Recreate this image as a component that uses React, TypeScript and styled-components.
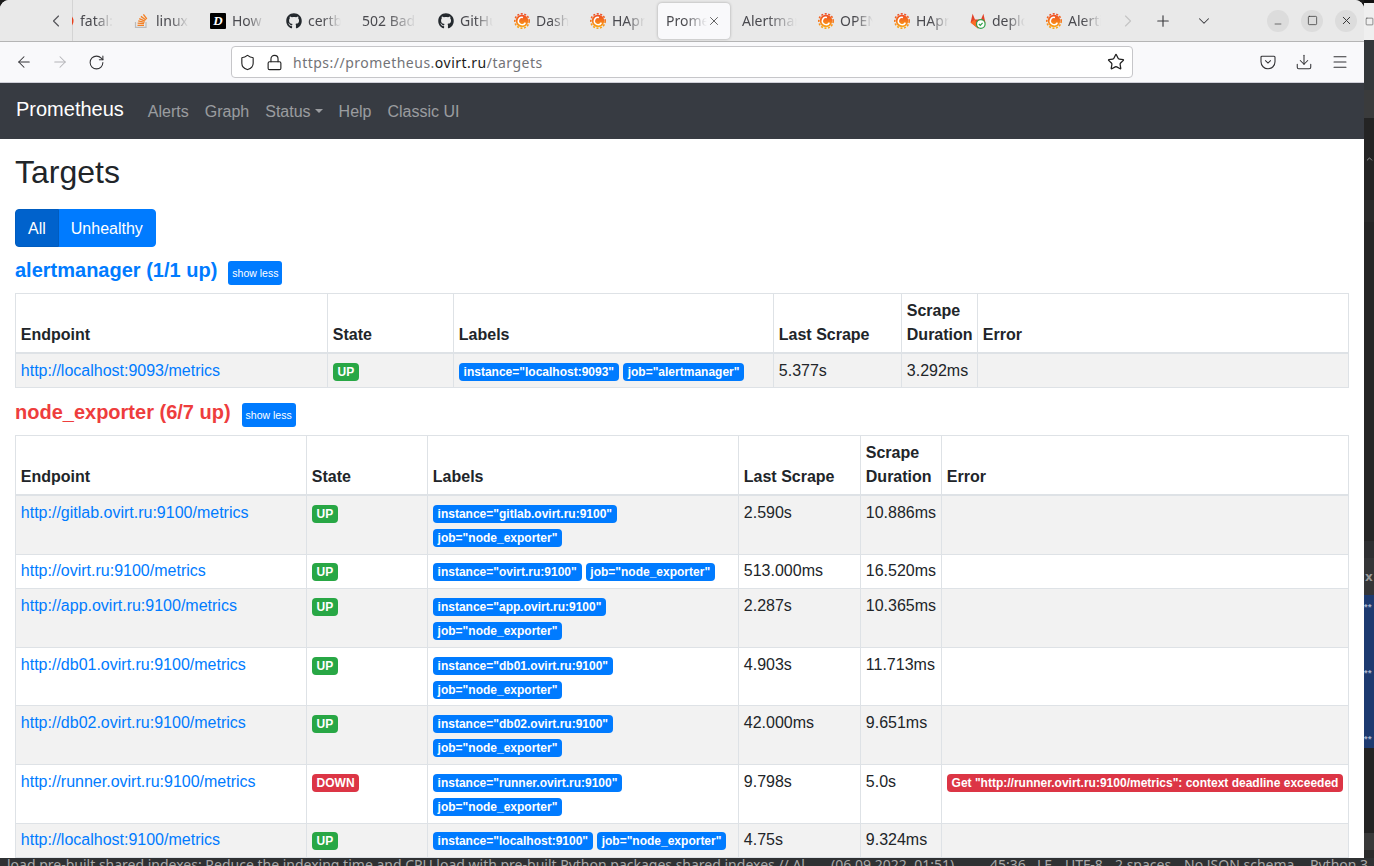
import React from "react";
import styled, { createGlobalStyle } from "styled-components";
import {
  ArrowLeft, ArrowRight, RotateCw, Shield, Lock, Star, Download, Menu, X, Plus,
  ChevronDown, ChevronLeft, ChevronRight, Minus, Square, ChevronUp,
} from "lucide-react";
import { FaGithub } from "react-icons/fa";

const Global = createGlobalStyle`
  html, body { margin: 0; padding: 0; background: #1c1c1c; }
  * { box-sizing: border-box; }
`;

const Screen = styled.div`
  width: 1374px; height: 866px; overflow: hidden;
  display: flex; flex-direction: column; background: #1c1c1c;
`;
const Desktop = styled.div`display: flex; flex: 0 0 858px; height: 858px;`;
const Browser = styled.div`
  flex: 0 0 1364px; width: 1364px; background: #fff; overflow: hidden;
  border-radius: 9px 9px 0 0; display: flex; flex-direction: column;
`;

/* ---------- tab strip ---------- */
const TabBar = styled.div`
  flex: 0 0 42px; height: 42px; background: #e9e9e9; border-bottom: 1px solid #b5b5b5;
  display: flex; align-items: center; color: #4a4a4f;
  font-family: "Noto Sans", sans-serif; font-size: 14px;
`;
const TabBack = styled.div`flex: 0 0 72px; padding-left: 46px; display: flex; align-items: center; color: #55555a;`;
const TabScroller = styled.div`
  flex: 0 0 1040px; overflow: hidden; display: flex; align-items: center; height: 41px;
  box-shadow: inset 1px 0 0 #d4d4d4;
`;
const TabRow = styled.div`display: flex; align-items: center; margin-left: -24px; flex: none;`;
const Tab = styled.div<{ $active?: boolean }>`
  flex: 0 0 72px; width: 72px; height: 36px; margin: 0 2px; padding: 0 9px 0 8px;
  display: flex; align-items: center; border-radius: 4px;
  background: ${(p) => (p.$active ? "#f9f9fb" : "transparent")};
  box-shadow: ${(p) => (p.$active ? "0 0 3px rgba(0,0,0,.3)" : "none")};
`;
const FavSlot = styled.span`flex: 0 0 22px; width: 22px; height: 16px; display: block;`;
const TabLabel = styled.span`
  flex: 1 1 0; min-width: 0; overflow: hidden; white-space: nowrap; line-height: 20px;
  -webkit-mask-image: linear-gradient(to right, #000 45%, transparent 100%);
  mask-image: linear-gradient(to right, #000 45%, transparent 100%);
`;
const TabClose = styled.span`flex: 0 0 14px; display: flex; color: #333;`;
const StripSlot = styled.div<{ $w: number; $c?: string }>`
  flex: 0 0 ${(p) => p.$w}px; display: flex; justify-content: center; align-items: center;
  color: ${(p) => p.$c ?? "#3a3a3e"};
`;
const WinControls = styled.div`display: flex; gap: 12px; margin-left: 41px;`;
const WinBtn = styled.div`
  width: 22px; height: 22px; border-radius: 50%; background: #dcdcdc; color: #333;
  display: flex; align-items: center; justify-content: center;
`;

/* ---------- url toolbar ---------- */
const Toolbar = styled.div`
  flex: 0 0 41px; height: 41px; background: #f9f9fb; border-bottom: 1px solid #cfcfd8;
  display: flex; align-items: center; padding-left: 6px;
`;
const ToolBtn = styled.div<{ $muted?: boolean }>`
  flex: 0 0 36px; display: flex; justify-content: center; align-items: center;
  color: ${(p) => (p.$muted ? "#b4b4b8" : "#333336")};
`;
const UrlBox = styled.div`
  flex: 0 0 902px; height: 32px; margin: 0 117px; background: #fff; border: 1px solid #c6c6c9;
  border-radius: 4px; display: flex; align-items: center; padding: 0 7px;
  font-family: "Noto Sans", sans-serif; font-size: 14px; letter-spacing: 0.49px; color: #737377;
`;
const UrlIcon = styled.span<{ $ml?: number }>`
  display: flex; flex: none; color: #222; margin-left: ${(p) => p.$ml ?? 0}px;
`;
const UrlText = styled.span`margin-left: 10px; flex: 1; white-space: nowrap;`;
const UrlHost = styled.span`color: #1a1a1a;`;

/* ---------- prometheus page ---------- */
const Nav = styled.nav`
  flex: 0 0 56px; height: 56px; background: #373b42; padding: 8px 16px; display: flex;
  align-items: center; font-family: "Liberation Sans", Arial, sans-serif;
`;
const Brand = styled.a`
  color: #fff; font-size: 20px; line-height: 30px; margin-right: 16px; padding-bottom: 4px;
`;
const NavLink = styled.a`
  color: rgba(255, 255, 255, 0.5); font-size: 16px; line-height: 24px; padding: 9px 8px 7px;
  display: flex; align-items: center;
`;
const Caret = styled.span`
  display: inline-block; margin-left: 4px; width: 0; height: 0;
  border-top: 4.8px solid currentColor; border-left: 4.8px solid transparent;
  border-right: 4.8px solid transparent; margin-bottom: 2px;
`;
const Main = styled.main`
  flex: 1; min-height: 0; overflow: hidden; padding: 14px 15px 0; color: #212529;
  font-family: "Liberation Sans", Arial, sans-serif; font-size: 16px; line-height: 24px;
`;
const Title = styled.h2`font-size: 32px; line-height: 38.4px; font-weight: 500; margin: 0 0 18px;`;
const Filter = styled.div`display: inline-flex; vertical-align: top; margin-bottom: 10.8px;`;
const FilterBtn = styled.button<{ $active?: boolean; $pos: "l" | "r" }>`
  height: 38px; padding: 7px 12px 5px; font: inherit; color: #fff; position: relative;
  z-index: ${(p) => (p.$active ? 1 : 0)};
  border: 1px solid ${(p) => (p.$active ? "#005cbf" : "#007bff")};
  background: ${(p) => (p.$active ? "#0062cc" : "#007bff")};
  margin-left: ${(p) => (p.$pos === "r" ? "-1px" : "0")};
  border-radius: ${(p) => (p.$pos === "l" ? "4px 0 0 4px" : "0 4px 4px 0")};
`;
const Section = styled.section`margin-bottom: 12.1px;`;
const SectionHead = styled.div`display: flex; align-items: flex-start; margin-bottom: 8px;`;
const SectionTitle = styled.a<{ $bad?: boolean }>`
  font-size: 20px; line-height: 24px; font-weight: 700; color: ${(p) => (p.$bad ? "#ee3d3d" : "#007bff")};
`;
const ShowLess = styled.button`
  height: 24px; margin: 3px 0 0 11px; padding: 0 4px; border: 0; border-radius: 3px; background: #007bff; color: #fff;
  font-family: "Liberation Sans", Arial, sans-serif; font-size: 10.5px; line-height: 24px;
`;
const Table = styled.table`
  width: 1333px; table-layout: fixed; border-collapse: collapse; font-size: 16px;
  th, td { border: 1px solid #dee2e6; padding: 4.8px; vertical-align: top; }
  th { vertical-align: bottom; text-align: left; font-weight: 700; border-bottom-width: 2px; }
  tbody tr:nth-child(odd) { background: rgba(0, 0, 0, 0.05); }
`;
const Endpoint = styled.a`color: #007bff;`;
const Badge = styled.span<{ $c: string }>`
  display: inline-block; padding: 3px 4.8px; margin-right: 4px; font-size: 12px; font-weight: 700;
  line-height: 1; white-space: nowrap; border-radius: 4px; color: #fff; background: ${(p) => p.$c};
`;

/* ---------- what lies behind the browser ---------- */
const SideStrip = styled.div`flex: 0 0 10px; width: 10px; display: flex; flex-direction: column; overflow: hidden;`;
const SideBlock = styled.div<{ $h: number; $bg: string }>`
  flex: 0 0 ${(p) => p.$h}px; height: ${(p) => p.$h}px; background: ${(p) => p.$bg}; color: #9a9a9a;
  display: flex; align-items: center; padding-left: 1px; overflow: hidden;
  font: 700 12px/14px "DejaVu Sans", sans-serif;
`;
const BlueBlock = styled(SideBlock)`
  flex-direction: column; align-items: flex-start; padding-top: 2px; gap: 46px; padding-left: 0;
  color: #aab4cc; font: 700 9px/20px "Liberation Sans", sans-serif; letter-spacing: 0.5px;
`;
const StatusBar = styled.div`
  flex: 0 0 8px; height: 8px; overflow: hidden; background: #2f3133; color: #a9a9a9; display: flex;
  font-family: "Noto Sans", sans-serif; font-size: 14px; line-height: 14px; white-space: nowrap;
`;
const StatusItem = styled.span<{ $w: number; $pl?: number }>`
  flex: 0 0 ${(p) => p.$w}px; width: ${(p) => p.$w}px; padding-left: ${(p) => p.$pl ?? 0}px; overflow: hidden;
`;

/* ---------- favicons ---------- */
const Grafana = () => (
  <svg width="16" height="16" viewBox="0 0 16 16">
    <defs>
      <linearGradient id="gf" x1="0" y1="0" x2="0" y2="1">
        <stop offset="0" stopColor="#ef4b23" />
        <stop offset="1" stopColor="#fba716" />
      </linearGradient>
    </defs>
    <circle cx="8" cy="8" r="7.2" fill="none" stroke="url(#gf)" strokeWidth="1.6" strokeDasharray="2 1.6" />
    <circle cx="8" cy="8" r="6.2" fill="url(#gf)" />
    <path d="M11.4 9.6A3.7 3.7 0 1 1 9 4.4" fill="none" stroke="#fff" strokeWidth="1.5" />
  </svg>
);
const StackOverflow = () => (
  <svg width="16" height="16" viewBox="0 0 16 16">
    <path d="M1.5 9v5.3h10.5V9" fill="none" stroke="#bcbbbb" strokeWidth="1.2" />
    <g stroke="#f48024" strokeWidth="1.3" fill="none">
      <path d="M3.5 12.4h6.5" />
      <path d="M3.6 10.2l6.5.5" />
      <path d="M4.2 7.9l6.3 1.5" />
      <path d="M5.2 5.6l5.8 2.6" />
      <path d="M6.9 3.4l5 3.6" />
      <path d="M9.4 1.4l3.4 4.6" />
    </g>
  </svg>
);
const DevLogo = styled.span`
  width: 16px; height: 16px; display: flex; align-items: center; justify-content: center;
  background: #000; color: #fff; border-radius: 1px;
  font: italic 700 13px/16px "Liberation Serif", serif;
`;
const GitLab = () => (
  <svg width="16" height="16" viewBox="0 0 16 16">
    <path d="M8 15.5L.6 9.6 2.6.8 5 6.6h6L13.4.8l2 8.8z" fill="#e24329" />
    <path d="M8 15.5L.6 9.6 5 6.6zM8 15.5l7.4-5.9L11 6.6z" fill="#fc6d26" />
    <circle cx="10.8" cy="11" r="4.3" fill="#fff" stroke="#31a24c" strokeWidth="1.2" />
    <path d="M8.9 11l1.4 1.4 2.3-2.6" fill="none" stroke="#31a24c" strokeWidth="1.2" />
  </svg>
);
const RedDot = () => (
  <svg width="16" height="16" viewBox="0 0 16 16"><circle cx="8" cy="8" r="7.5" fill="#e8401c" /></svg>
);
const Pocket = () => (
  <svg width="16" height="16" viewBox="0 0 16 16" fill="none" stroke="currentColor" strokeWidth="1.1">
    <path d="M2 2.2h12a1 1 0 0 1 1 1v4.6a7 7 0 0 1-14 0V3.2a1 1 0 0 1 1-1z" />
    <path d="M5.2 6.4L8 9.1l2.8-2.7" />
  </svg>
);

type TabInfo = { label: string; icon?: React.ReactNode; active?: boolean };
const tabs: TabInfo[] = [
  { label: "fatal: could", icon: <RedDot /> },
  { label: "linux - How", icon: <StackOverflow /> },
  { label: "How to", icon: <DevLogo>D</DevLogo> },
  { label: "certbot", icon: <FaGithub size={16} color="#24292e" /> },
  { label: "502 Bad Gateway" },
  { label: "GitHub", icon: <FaGithub size={16} color="#24292e" /> },
  { label: "Dashboard", icon: <Grafana /> },
  { label: "HAproxy", icon: <Grafana /> },
  { label: "Prometheus", active: true },
  { label: "Alertmanager" },
  { label: "OPEN", icon: <Grafana /> },
  { label: "HAproxy", icon: <Grafana /> },
  { label: "deploy", icon: <GitLab /> },
  { label: "Alerting", icon: <Grafana /> },
];

const BLUE = "#007bff";
const GREEN = "#28a745";
const RED = "#dc3545";

type Target = { host: string; down?: boolean; last: string; dur: string; job: string; err?: string };
const groupOne: Target[] = [
  { host: "localhost:9093", last: "5.377s", dur: "3.292ms", job: "alertmanager" },
];
const groupTwo: Target[] = [
  { host: "gitlab.ovirt.ru:9100", last: "2.590s", dur: "10.886ms", job: "node_exporter" },
  { host: "ovirt.ru:9100", last: "513.000ms", dur: "16.520ms", job: "node_exporter" },
  { host: "app.ovirt.ru:9100", last: "2.287s", dur: "10.365ms", job: "node_exporter" },
  { host: "db01.ovirt.ru:9100", last: "4.903s", dur: "11.713ms", job: "node_exporter" },
  { host: "db02.ovirt.ru:9100", last: "42.000ms", dur: "9.651ms", job: "node_exporter" },
  {
    host: "runner.ovirt.ru:9100", down: true, last: "9.798s", dur: "5.0s", job: "node_exporter",
    err: 'Get "http://runner.ovirt.ru:9100/metrics": context deadline exceeded',
  },
  { host: "localhost:9100", last: "4.75s", dur: "9.324ms", job: "node_exporter" },
];

const TargetTable = ({ widths, rows }: { widths: number[]; rows: Target[] }) => (
  <Table>
    <colgroup>
      {widths.map((w, i) => <col key={i} width={w} />)}
    </colgroup>
    <thead>
      <tr>
        <th>Endpoint</th><th>State</th><th>Labels</th><th>Last Scrape</th><th>Scrape Duration</th><th>Error</th>
      </tr>
    </thead>
    <tbody>
      {rows.map((r) => (
        <tr key={r.host}>
          <td><Endpoint>http://{r.host}/metrics</Endpoint></td>
          <td><Badge $c={r.down ? RED : GREEN}>{r.down ? "DOWN" : "UP"}</Badge></td>
          <td>
            <Badge $c={BLUE}>instance="{r.host}"</Badge>
            <Badge $c={BLUE}>job="{r.job}"</Badge>
          </td>
          <td>{r.last}</td>
          <td>{r.dur}</td>
          <td>{r.err && <Badge $c={RED}>{r.err}</Badge>}</td>
        </tr>
      ))}
    </tbody>
  </Table>
);

export default function App() {
  return (
    <Screen>
      <Global />
      <Desktop>
        <Browser>
          <TabBar>
            <TabBack><ChevronLeft size={20} strokeWidth={1.4} /></TabBack>
            <TabScroller>
              <TabRow>
                {tabs.map((t, i) => (
                  <Tab key={i} $active={t.active}>
                    {t.icon && <FavSlot>{t.icon}</FavSlot>}
                    <TabLabel>{t.label}</TabLabel>
                    {t.active && <TabClose><X size={14} strokeWidth={1.3} /></TabClose>}
                  </Tab>
                ))}
              </TabRow>
            </TabScroller>
            <StripSlot $w={32} $c="#c4c4c4"><ChevronRight size={20} strokeWidth={1.4} /></StripSlot>
            <StripSlot $w={38}><Plus size={18} strokeWidth={1.5} /></StripSlot>
            <StripSlot $w={44}><ChevronDown size={18} strokeWidth={1.4} /></StripSlot>
            <WinControls>
              <WinBtn><Minus size={10} strokeWidth={1.6} style={{ marginTop: 6 }} /></WinBtn>
              <WinBtn><Square size={11} strokeWidth={1.6} /></WinBtn>
              <WinBtn><X size={13} strokeWidth={1.8} /></WinBtn>
            </WinControls>
          </TabBar>
          <Toolbar>
            <ToolBtn><ArrowLeft size={18} strokeWidth={1.4} /></ToolBtn>
            <ToolBtn $muted><ArrowRight size={18} strokeWidth={1.4} /></ToolBtn>
            <ToolBtn><RotateCw size={17} strokeWidth={1.5} /></ToolBtn>
            <UrlBox>
              <UrlIcon><Shield size={17} strokeWidth={1.6} /></UrlIcon>
              <UrlIcon $ml={10}><Lock size={17} strokeWidth={1.6} /></UrlIcon>
              <UrlText>https://prometheus.<UrlHost>ovirt.ru</UrlHost>/targets</UrlText>
              <UrlIcon><Star size={18} strokeWidth={1.7} /></UrlIcon>
            </UrlBox>
            <ToolBtn><Pocket /></ToolBtn>
            <ToolBtn><Download size={18} strokeWidth={1.4} /></ToolBtn>
            <ToolBtn><Menu size={18} strokeWidth={1.4} /></ToolBtn>
          </Toolbar>
          <Nav>
            <Brand>Prometheus</Brand>
            <NavLink>Alerts</NavLink>
            <NavLink>Graph</NavLink>
            <NavLink>Status<Caret /></NavLink>
            <NavLink>Help</NavLink>
            <NavLink>Classic UI</NavLink>
          </Nav>
          <Main>
            <Title>Targets</Title>
            <Filter>
              <FilterBtn $active $pos="l">All</FilterBtn>
              <FilterBtn $pos="r">Unhealthy</FilterBtn>
            </Filter>
            <Section>
              <SectionHead>
                <SectionTitle>alertmanager (1/1 up)</SectionTitle>
                <ShowLess>show less</ShowLess>
              </SectionHead>
              <TargetTable widths={[312, 126, 320, 128, 76, 371]} rows={groupOne} />
            </Section>
            <Section>
              <SectionHead>
                <SectionTitle $bad>node_exporter (6/7 up)</SectionTitle>
                <ShowLess>show less</ShowLess>
              </SectionHead>
              <TargetTable widths={[291, 121, 311, 122, 81, 407]} rows={groupTwo} />
            </Section>
          </Main>
        </Browser>
        <SideStrip>
          <SideBlock $h={3} $bg="#111" />
          <SideBlock $h={37} $bg="#efefef"><Square size={9} color="#444" strokeWidth={1.5} /></SideBlock>
          <SideBlock $h={50} $bg="#33373a" />
          <SideBlock $h={28} $bg="#3a3b3c" />
          <SideBlock $h={82} $bg="#242424"><ChevronUp size={10} color="#aaa" strokeWidth={2} /></SideBlock>
          <SideBlock $h={22} $bg="#2a2a2a" />
          <SideBlock $h={319} $bg="#262626" />
          <SideBlock $h={17} $bg="#2e2f31" />
          <SideBlock $h={37} $bg="#343537">x</SideBlock>
          <BlueBlock $h={153} $bg="#1d3a70"><span>**</span><span>**</span><span>**</span></BlueBlock>
          <SideBlock $h={85} $bg="#232323" />
          <SideBlock $h={17} $bg="#393939" />
          <SideBlock $h={8} $bg="#2b2b2b" />
        </SideStrip>
      </Desktop>
      <StatusBar>
        <StatusItem $w={831} $pl={7}>load pre-built shared indexes: Reduce the indexing time and CPU load with pre-built Python packages shared indexes // Al...</StatusItem>
        <StatusItem $w={159}>(06.09.2022, 01:51)</StatusItem>
        <StatusItem $w={47}>45:36</StatusItem>
        <StatusItem $w={28}>LF</StatusItem>
        <StatusItem $w={50}>UTF-8</StatusItem>
        <StatusItem $w={69}>2 spaces</StatusItem>
        <StatusItem $w={126}>No JSON schema</StatusItem>
        <StatusItem $w={64}>Python 3</StatusItem>
      </StatusBar>
    </Screen>
  );
}
